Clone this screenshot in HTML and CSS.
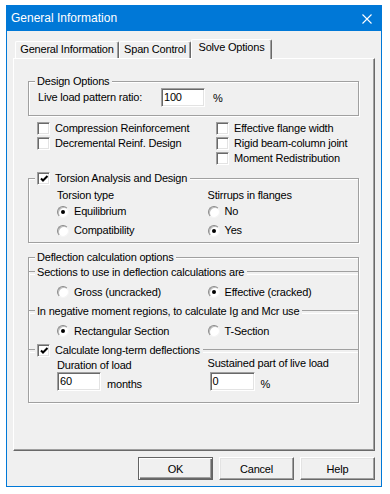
FILE: index.html
```html
<!DOCTYPE html>
<html>
<head>
    <title>General Information</title>
    <link rel="stylesheet" href="styles.css">
</head>
<body>
    <div class="window">
        <div class="titlebar">
            <span class="title">General Information</span>
            <svg class="close" width="10" height="10" viewBox="0 0 10 10"><path d="M0.5 0.5L9.5 9.5M9.5 0.5L0.5 9.5" stroke="#fff" stroke-width="1.1"/></svg>
        </div>
        <div class="content">
            <div class="tabs">
                <div class="tab t1">General Information</div>
                <div class="tab t2">Span Control</div>
                <div class="tab t3 active">Solve Options</div>
            </div>
            <div class="panel">
                <fieldset class="group">
                    <legend>Design Options</legend>
                    <div class="ratio-row">
                        <span class="ratio-label">Live load pattern ratio:</span>
                        <span class="field w44">100</span>
                        <span class="unit">%</span>
                    </div>
                </fieldset>

                <div class="checks">
                    <div class="col-left">
                        <div class="check"><span class="cb"></span>Compression Reinforcement</div>
                        <div class="check"><span class="cb"></span>Decremental Reinf. Design</div>
                    </div>
                    <div class="col-right">
                        <div class="check"><span class="cb"></span>Effective flange width</div>
                        <div class="check"><span class="cb"></span>Rigid beam-column joint</div>
                        <div class="check"><span class="cb"></span>Moment Redistribution</div>
                    </div>
                </div>

                <fieldset class="group torsion">
                    <legend class="check-legend"><span class="cb checked"><svg width="9" height="9" viewBox="0 0 9 9"><polyline points="1,3.5 3,5.5 7.5,1" fill="none" stroke="#000" stroke-width="2"/></svg></span>Torsion Analysis and Design</legend>
                    <div class="torsion-body">
                        <div class="opt-col">
                            <div class="caption">Torsion type</div>
                            <div class="radio-row"><span class="rb on"></span>Equilibrium</div>
                            <div class="radio-row"><span class="rb"></span>Compatibility</div>
                        </div>
                        <div class="opt-col">
                            <div class="caption">Stirrups in flanges</div>
                            <div class="radio-row"><span class="rb"></span>No</div>
                            <div class="radio-row"><span class="rb on"></span>Yes</div>
                        </div>
                    </div>
                </fieldset>

                <fieldset class="group deflection">
                    <legend>Deflection calculation options</legend>
                    <div class="subhead first"><span>Sections to use in deflection calculations are</span></div>
                    <div class="pair">
                        <div class="pair-item"><span class="rb"></span>Gross (uncracked)</div>
                        <div class="pair-item"><span class="rb on"></span>Effective (cracked)</div>
                    </div>
                    <div class="subhead"><span>In negative moment regions, to calculate Ig and Mcr use</span></div>
                    <div class="pair">
                        <div class="pair-item"><span class="rb on"></span>Rectangular Section</div>
                        <div class="pair-item"><span class="rb"></span>T-Section</div>
                    </div>
                    <div class="subhead"><span class="check-text"><span class="cb checked"><svg width="9" height="9" viewBox="0 0 9 9"><polyline points="1,3.5 3,5.5 7.5,1" fill="none" stroke="#000" stroke-width="2"/></svg></span>Calculate long-term deflections</span></div>
                    <div class="longterm">
                        <div class="lt-col">
                            <div class="caption">Duration of load</div>
                            <div class="input-row">
                                <span class="field w44">60</span>
                                <span class="unit-after">months</span>
                            </div>
                        </div>
                        <div class="lt-col">
                            <div class="caption up">Sustained part of live load</div>
                            <div class="input-row">
                                <span class="field w45 shift">0</span>
                                <span class="unit-after">%</span>
                            </div>
                        </div>
                    </div>
                </fieldset>
            </div>
            <div class="buttons">
                <button class="btn default">OK</button>
                <button class="btn">Cancel</button>
                <button class="btn">Help</button>
            </div>
        </div>
    </div>
</body>
</html>
```

FILE: styles.css
```css
* {
    box-sizing: border-box;
}
body {
    margin: 0;
    background: #fff;
    font-family: "Liberation Sans", Arial, sans-serif;
    font-size: 11px;
    letter-spacing: -0.2px;
    line-height: 13px;
    color: #000;
}
.window {
    width: 376px;
    margin: 5px 0 0 6px;
    border: 1px solid #0078d7;
    background: #f0f0f0;
}
.titlebar {
    height: 25px;
    background: #0078d7;
    color: #fff;
    display: flex;
    align-items: center;
    justify-content: space-between;
    padding: 0 9px 0 4px;
}
.title {
    font-size: 12px;
    letter-spacing: 0;
    padding-bottom: 1px;
}
.content {
    padding: 8px 6px 6px;
}

/* tabs */
.tabs {
    display: flex;
    align-items: flex-end;
    height: 19px;
    padding-left: 2px;
    position: relative;
    z-index: 1;
}
.tab {
    height: 17px;
    line-height: 15px;
    text-align: center;
    background: #f0f0f0;
    border: 1px solid #fff;
    border-bottom: none;
    border-right-color: #696969;
    box-shadow: inset -1px 0 #a0a0a0;
    border-radius: 2px 2px 0 0;
}
.t1 { width: 104px; }
.t2 { width: 72px; }
.t3 { width: 81px; }
.tab.active {
    height: 20px;
    line-height: 15px;
    margin-bottom: -1px;
}
.panel {
    height: 393px;
    border: 1px solid #fff;
    border-right-color: #696969;
    border-bottom-color: #696969;
    box-shadow: inset -1px -1px #a0a0a0;
    padding: 16px 15px 0 14px;
}

/* group boxes */
.group {
    margin: 0;
    padding: 0;
    min-width: 0;
    border: 1px solid #a0a0a0;
    box-shadow: inset 1px 1px #fff, 1px 1px #fff;
}
.group legend {
    margin-left: 6px;
    padding: 0 3px 0 2px;
    background: #f0f0f0;
    line-height: 13px;
}
.check-legend, .check-text {
    display: flex;
    align-items: center;
}
.ratio-row {
    display: flex;
    align-items: center;
    height: 20px;
    margin-top: -1px;
    margin-bottom: 8px;
    padding-left: 9px;
}
.ratio-label {
    width: 123px;
}
.unit {
    margin-left: 8px;
    padding-top: 3px;
}
.field {
    display: inline-block;
    height: 19px;
    line-height: 17px;
    background: #fff;
    border: 1px solid;
    border-color: #a0a0a0 #fff #fff #a0a0a0;
    box-shadow: inset 1px 1px #696969, inset -1px -1px #e3e3e3;
    padding-left: 2px;
}
.w44 { width: 44px; }
.w45 { width: 45px; }
.shift { margin-left: 2px; }

/* checkboxes and radios */
.cb {
    display: inline-flex;
    flex: none;
    width: 13px;
    height: 13px;
    margin-right: 5px;
    padding: 1px 0 0 1px;
    background: #fff;
    border: 1px solid;
    border-color: #a0a0a0 #fff #fff #a0a0a0;
    box-shadow: inset 1px 1px #696969, inset -1px -1px #e3e3e3;
}
.cb svg {
    display: block;
    margin: 1px 0 0 1px;
}
.rb {
    display: inline-block;
    flex: none;
    position: relative;
    width: 12px;
    height: 12px;
    margin-right: 5px;
    border-radius: 50%;
    background: #fff;
    border: 1px solid;
    border-color: #8a8a8a #f4f4f4 #f4f4f4 #8a8a8a;
    box-shadow: inset 1px 1px #bdbdbd;
}
.rb.on::after {
    content: "";
    position: absolute;
    left: 3px;
    top: 3px;
    width: 4px;
    height: 4px;
    border-radius: 50%;
    background: #000;
}
.checks {
    display: flex;
    margin: 5px 0 0 9px;
}
.col-left {
    width: 179px;
}
.check {
    display: flex;
    align-items: center;
    height: 15px;
}

/* torsion */
.torsion {
    margin-top: 6px;
}
.torsion-body {
    display: flex;
    padding: 4px 0 2px 28px;
}
.opt-col {
    width: 158px;
}
.radio-row {
    display: flex;
    align-items: center;
    height: 19px;
}

/* deflection */
.deflection {
    margin-top: 8px;
}
.subhead {
    display: flex;
    align-items: center;
    height: 13px;
}
.subhead.first {
    margin-top: 2px;
}
.subhead::before,
.subhead::after {
    content: "";
    height: 2px;
    border-top: 1px solid #a0a0a0;
    border-bottom: 1px solid #fff;
}
.subhead::before {
    width: 6px;
    margin-right: 2px;
}
.subhead::after {
    flex: 1;
    margin-left: 3px;
}
.pair {
    display: flex;
    align-items: center;
    height: 26px;
    padding-left: 28px;
}
.pair-item {
    display: flex;
    align-items: center;
    width: 159px;
}
.longterm {
    display: flex;
    margin-top: 2px;
    padding: 0 0 11px 28px;
}
.lt-col {
    width: 158px;
}
.caption.up {
    margin-top: -2px;
    margin-bottom: 2px;
}
.input-row {
    display: flex;
    align-items: flex-end;
}
.unit-after {
    margin-left: 6px;
}

/* buttons */
.buttons {
    display: flex;
    justify-content: flex-end;
    gap: 6px;
    margin-top: 6px;
}
.btn {
    width: 75px;
    height: 23px;
    padding: 0;
    font-family: inherit;
    font-size: 11px;
    letter-spacing: -0.2px;
    color: #000;
    background: #f0f0f0;
    border: 1px solid;
    border-color: #fff #696969 #696969 #fff;
    box-shadow: inset -1px -1px #a0a0a0, inset 1px 1px #e3e3e3;
}
.btn.default {
    border-color: #646464;
    box-shadow: inset 1px 1px #fff, inset -1px -1px #696969, inset -2px -2px #a0a0a0;
}
```
